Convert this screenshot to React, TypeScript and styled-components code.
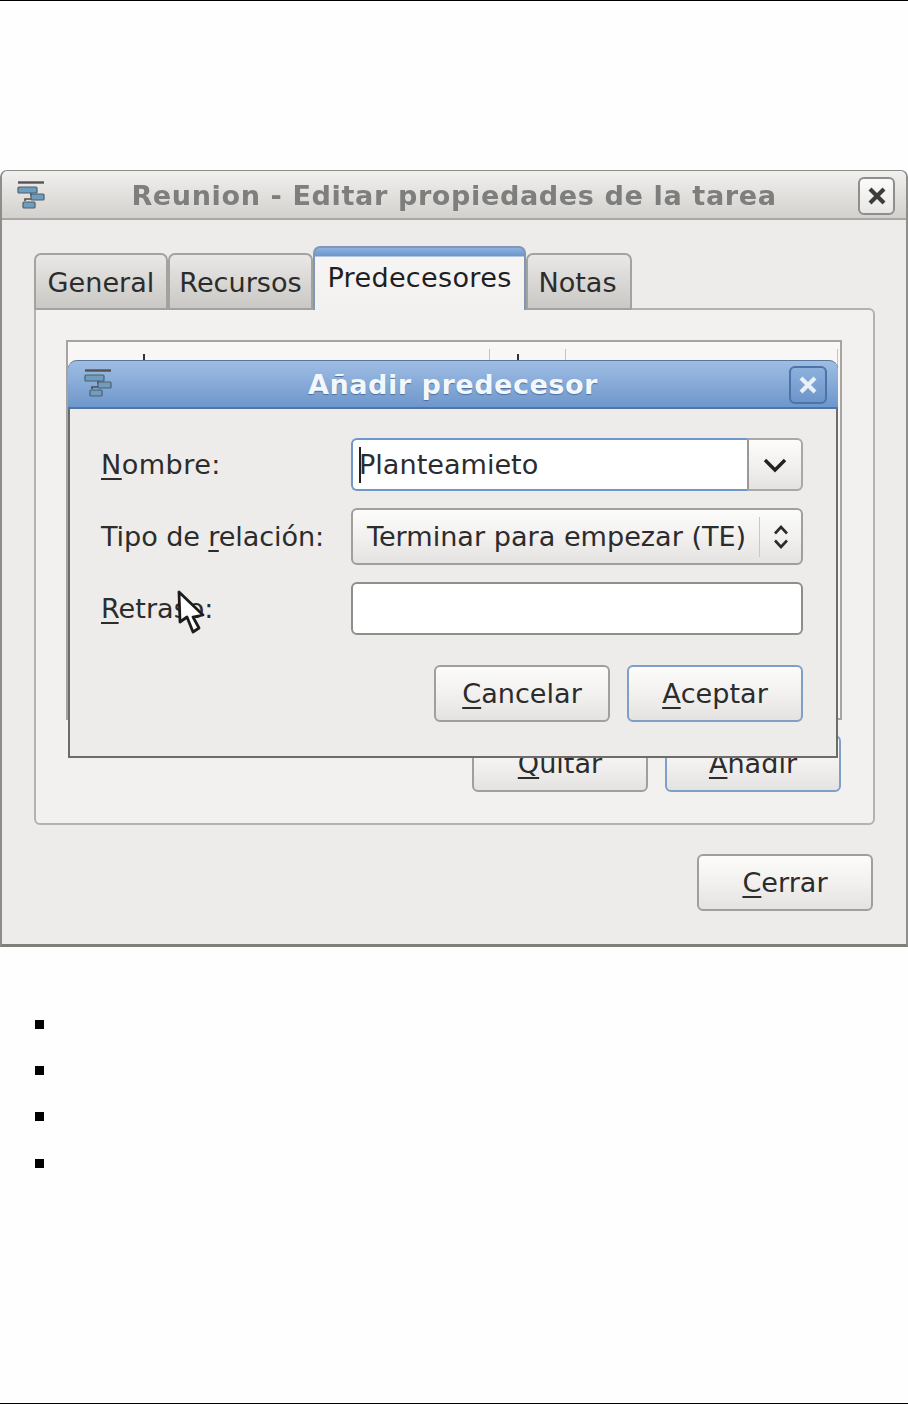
import React from 'react'
import styled, { createGlobalStyle } from 'styled-components'

const GlobalStyle = createGlobalStyle`
  html, body {
    margin: 0;
    padding: 0;
    background: #fefefe;
  }
  * {
    box-sizing: border-box;
  }
`

const bullets = [0, 1, 2, 3]

function GanttIcon() {
  return (
    <IconSvg width="30" height="30" viewBox="0 0 30 30">
      <path d="M1 2.5h26" stroke="#55534f" strokeWidth="2.4" fill="none" />
      <path d="M14 12v4M8 21v-2h6" stroke="#4d4d4a" strokeWidth="1.6" fill="none" />
      <rect x="1" y="7" width="19" height="6" rx="1" fill="#6f9dbd" stroke="#4a5f6d" strokeWidth="1.2" />
      <rect x="14" y="14" width="13" height="6" rx="1" fill="#6f9dbd" stroke="#4a5f6d" strokeWidth="1.2" />
      <rect x="6" y="22" width="12" height="6" rx="1" fill="#6f9dbd" stroke="#4a5f6d" strokeWidth="1.2" />
    </IconSvg>
  )
}

function CloseGlyph({ color }: { color: string }) {
  return (
    <svg width="20" height="20" viewBox="0 0 20 20">
      <path d="M3 3l14 14M17 3L3 17" stroke={color} strokeWidth="4.2" fill="none" />
    </svg>
  )
}

function Cursor() {
  return (
    <CursorSvg width="32" height="46" viewBox="0 0 32 46">
      <path
        d="M3 2L4 32L11 27L17 42L23 38L17 27L27 25Z"
        fill="#fff"
        stroke="#1c1c1c"
        strokeWidth="2.8"
        strokeLinejoin="round"
      />
    </CursorSvg>
  )
}

export default function App() {
  return (
    <Page>
      <GlobalStyle />
      <Rule />
      <Window>
        <TitleBar>
          <GanttIcon />
          <TitleText>Reunion - Editar propiedades de la tarea</TitleText>
          <CloseButton>
            <CloseGlyph color="#3c3c3a" />
          </CloseButton>
        </TitleBar>
        <Body>
          <TabBar>
            <Tab $width={134}>General</Tab>
            <Tab $width={145}>Recursos</Tab>
            <Tab $width={213} $active>
              Predecesores
            </Tab>
            <Tab $width={106} $endInset={3}>
              Notas
            </Tab>
          </TabBar>
          <Panel>
            <TreeList>
              <TreeHeader>
                <HeaderCell $width={422} $tick={75} />
                <HeaderCell $width={76} $tick={27} />
                <HeaderCell $width={272} />
              </TreeHeader>
            </TreeList>
            <ButtonRow>
              <PushButton>
                <Key>Q</Key>uitar
              </PushButton>
              <PushButton $focused>
                <Key>A</Key>ñadir
              </PushButton>
            </ButtonRow>
          </Panel>
          <Footer>
            <PushButton>
              <Key>C</Key>errar
            </PushButton>
          </Footer>
        </Body>

        <Dialog>
          <DialogTitleBar>
            <GanttIcon />
            <DialogTitle>Añadir predecesor</DialogTitle>
            <DialogClose>
              <CloseGlyph color="#e9f0f8" />
            </DialogClose>
          </DialogTitleBar>
          <DialogBody>
            <FormGrid>
              <Label $tracking={0.45}>
                <Key>N</Key>ombre:
              </Label>
              <Combo>
                <ComboEntry>
                  <Caret />
                  Planteamieto
                </ComboEntry>
                <ComboArrow>
                  <svg width="26" height="16" viewBox="0 0 26 16">
                    <path d="M3 3l10 10L23 3" stroke="#222" strokeWidth="3.4" fill="none" />
                  </svg>
                </ComboArrow>
              </Combo>
              <Label $tracking={-0.1}>
                Tipo de <Key>r</Key>elación:
              </Label>
              <SelectBox>
                <span>Terminar para empezar (TE)</span>
                <SelectDivider />
                <svg width="18" height="26" viewBox="0 0 18 26">
                  <path d="M3 9.5L9 3l6 6.5M3 16.5L9 23l6-6.5" stroke="#2b2b2b" strokeWidth="2.6" fill="none" />
                </svg>
              </SelectBox>
              <Label>
                <Key>R</Key>etraso:
              </Label>
              <Entry />
            </FormGrid>
            <DialogActions>
              <PushButton>
                <Key>C</Key>ancelar
              </PushButton>
              <PushButton $focused>
                <Key>A</Key>ceptar
              </PushButton>
            </DialogActions>
          </DialogBody>
          <Cursor />
        </Dialog>
      </Window>

      <BulletList>
        {bullets.map((b) => (
          <BulletItem key={b} />
        ))}
      </BulletList>
      <BottomRule />
    </Page>
  )
}

const Page = styled.div`
  display: flex;
  flex-direction: column;
  height: 100vh;
  overflow: hidden;
  background: #fefefe;
  font-family: 'DejaVu Sans', sans-serif;
  font-size: 27.1px;
  color: #2c2c2c;
`

const Rule = styled.div`
  height: 1px;
  flex: none;
  background: #000;
`

const BottomRule = styled(Rule)`
  margin-top: auto;
`

const Window = styled.div`
  position: relative;
  flex: none;
  height: 777px;
  margin-top: 169px;
  background: #edecea;
  border: 2px solid #8e8d89;
  border-top-width: 1px;
  border-bottom: 3px solid #7f7e7a;
  border-radius: 7px 7px 0 0;
  filter: blur(0.7px);
`

const TitleBar = styled.div`
  position: relative;
  display: flex;
  align-items: center;
  justify-content: center;
  height: 49px;
  padding: 1px 15px 0;
  background: linear-gradient(#f1f0ee, #d2d1ce);
  border-bottom: 2px solid #a9a8a4;
  border-radius: 6px 6px 0 0;
`

const IconSvg = styled.svg`
  position: absolute;
  left: 15px;
  top: 9px;
`

const TitleText = styled.div`
  font-weight: 700;
  color: #7e7e7c;
  letter-spacing: 0.6px;
`

const CloseButton = styled.div`
  position: absolute;
  right: 11px;
  top: 6px;
  display: flex;
  align-items: center;
  justify-content: center;
  width: 37px;
  height: 38px;
  border: 2px solid #8f8e8a;
  border-radius: 6px;
  background: linear-gradient(#fbfbfa, #e8e7e5);
`

const Body = styled.div`
  padding: 26px 33px 0 32px;
`

const TabBar = styled.div`
  position: relative;
  z-index: 1;
  display: flex;
  align-items: flex-end;
  height: 64px;
  margin-bottom: -2px;
`

const Tab = styled.div<{ $width: number; $active?: boolean; $endInset?: number }>`
  display: flex;
  align-items: center;
  justify-content: center;
  width: ${(p) => p.$width}px;
  height: ${(p) => (p.$active ? 64 : 57)}px;
  border: 2px solid ${(p) => (p.$active ? '#7f98b5' : '#a3a29e')};
  border-bottom: ${(p) => (p.$active ? 'none' : '2px solid #a3a29e')};
  border-radius: 7px 7px 0 0;
  padding-top: ${(p) => (p.$active ? 0 : 1)}px;
  padding-right: ${(p) => p.$endInset ?? 0}px;
  padding-bottom: ${(p) => (p.$active ? 4 : 0)}px;
  background: ${(p) =>
    p.$active
      ? 'linear-gradient(#8fb1de 0, #6a97cf 8px, #f6f5f4 9px, #f2f1f0 100%)'
      : 'linear-gradient(#e9e8e6, #c9c8c5)'};
  color: ${(p) => (p.$active ? '#1f1f1f' : '#2c2c2c')};
  letter-spacing: ${(p) => (p.$active ? 0.3 : 0)}px;
`

const Panel = styled.div`
  display: flex;
  flex-direction: column;
  height: 517px;
  margin-right: -2px;
  padding: 32px 31px 31px 30px;
  background: #f2f1ef;
  border: 2px solid #b3b2ae;
  border-radius: 0 6px 6px 6px;
`

const TreeList = styled.div`
  flex: 1;
  margin: -2px 0 15px;
  background: #f8f7f6;
  border: 2px solid #a5a4a0;
`

const TreeHeader = styled.div`
  display: flex;
  height: 50px;
  margin-top: 7px;
`

const HeaderCell = styled.div<{ $width: number; $tick?: number }>`
  position: relative;
  width: ${(p) => p.$width}px;
  border-right: 1px solid #c4c3bf;
  &::before {
    content: '';
    display: ${(p) => (p.$tick ? 'block' : 'none')};
    width: 2px;
    height: 6px;
    margin-left: ${(p) => p.$tick}px;
    margin-top: 5px;
    background: #333;
  }
`

const ButtonRow = styled.div`
  display: flex;
  justify-content: flex-end;
  gap: 17px;
  margin-right: 1px;
`

const PushButton = styled.div<{ $focused?: boolean }>`
  display: flex;
  align-items: center;
  justify-content: center;
  width: 176px;
  height: 57px;
  border: 2px solid ${(p) => (p.$focused ? '#7f9fc8' : '#a09f9b')};
  border-radius: 6px;
  background: linear-gradient(#fcfcfb, #f2f1f0 50%, #e4e3e1);
  white-space: pre;
`

const Key = styled.span`
  text-decoration: underline;
  text-decoration-thickness: 2px;
  text-underline-offset: 4px;
`

const Footer = styled.div`
  display: flex;
  justify-content: flex-end;
  padding-top: 29px;
`

const Dialog = styled.div`
  position: absolute;
  left: 66px;
  top: 189px;
  width: 770px;
  height: 398px;
  background: #edecea;
  border: 2px solid #6d6c68;
  border-top: none;
  border-radius: 9px 9px 0 0;
`

const DialogTitleBar = styled(TitleBar)`
  margin: 0 -2px;
  padding-top: 0;
  background: linear-gradient(#9ebde4, #6f97cb);
  border-top: 1px solid #58779c;
  border-bottom: 2px solid #4f76a6;
  border-radius: 9px 9px 0 0;

  ${IconSvg} {
    left: 16px;
    top: 7px;
  }
`

const DialogTitle = styled.div`
  font-weight: 700;
  color: #f3f6fa;
  letter-spacing: 0.5px;
  text-shadow: 0 1px 1px #4a6f9f;
`

const DialogClose = styled.div`
  position: absolute;
  right: 11px;
  top: 5px;
  display: flex;
  align-items: center;
  justify-content: center;
  width: 38px;
  height: 38px;
  border: 2px solid #4c74a6;
  border-radius: 6px;
  background: linear-gradient(#8db0dd, #6d95ca);
`

const DialogBody = styled.div`
  padding: 29px 33px 0 31px;
`

const FormGrid = styled.div`
  display: grid;
  grid-template-columns: 250px 452px;
  grid-template-rows: 53px 57px 53px;
  row-gap: 17px;
  align-items: center;
`

const Label = styled.div<{ $tracking?: number }>`
  white-space: pre;
  letter-spacing: ${(p) => p.$tracking ?? 0}px;
`

const Combo = styled.div`
  display: flex;
  height: 53px;
`

const ComboEntry = styled.div`
  display: flex;
  align-items: center;
  flex: 1;
  padding-left: 6px;
  background: #fff;
  border: 2px solid #6f97c7;
  border-right-color: #9a9996;
  border-radius: 6px 0 0 6px;
`

const Caret = styled.div`
  width: 2px;
  height: 36px;
  margin-right: -2px;
  background: #222;
`

const ComboArrow = styled.div`
  display: flex;
  align-items: center;
  justify-content: center;
  width: 54px;
  background: linear-gradient(#fcfcfb, #f2f1f0 50%, #e4e3e1);
  border: 2px solid #a9a8a4;
  border-left: none;
  border-radius: 0 6px 6px 0;
`

const SelectBox = styled.div`
  display: flex;
  align-items: center;
  height: 57px;
  padding: 0 11px 0 14px;
  background: linear-gradient(#fcfcfb, #f2f1f0 50%, #e4e3e1);
  border: 2px solid #a09f9b;
  border-radius: 6px;
  white-space: pre;
`

const SelectDivider = styled.div`
  width: 1px;
  height: 40px;
  margin: 0 12px 0 auto;
  background: #c9c8c5;
`

const Entry = styled.div`
  height: 53px;
  background: #fff;
  border: 2px solid #8f8e8a;
  border-radius: 6px;
`

const DialogActions = styled.div`
  display: flex;
  justify-content: flex-end;
  gap: 17px;
  margin-top: 30px;
`

const CursorSvg = styled.svg`
  position: absolute;
  left: 106px;
  top: 230px;
`

const BulletList = styled.ul`
  flex: none;
  list-style: none;
  margin: 54px 0 0;
  padding: 0 0 0 35px;
`

const BulletItem = styled.li`
  display: flex;
  align-items: center;
  height: 46.33px;
  &::before {
    content: '';
    width: 9px;
    height: 9px;
    background: #000;
  }
`
